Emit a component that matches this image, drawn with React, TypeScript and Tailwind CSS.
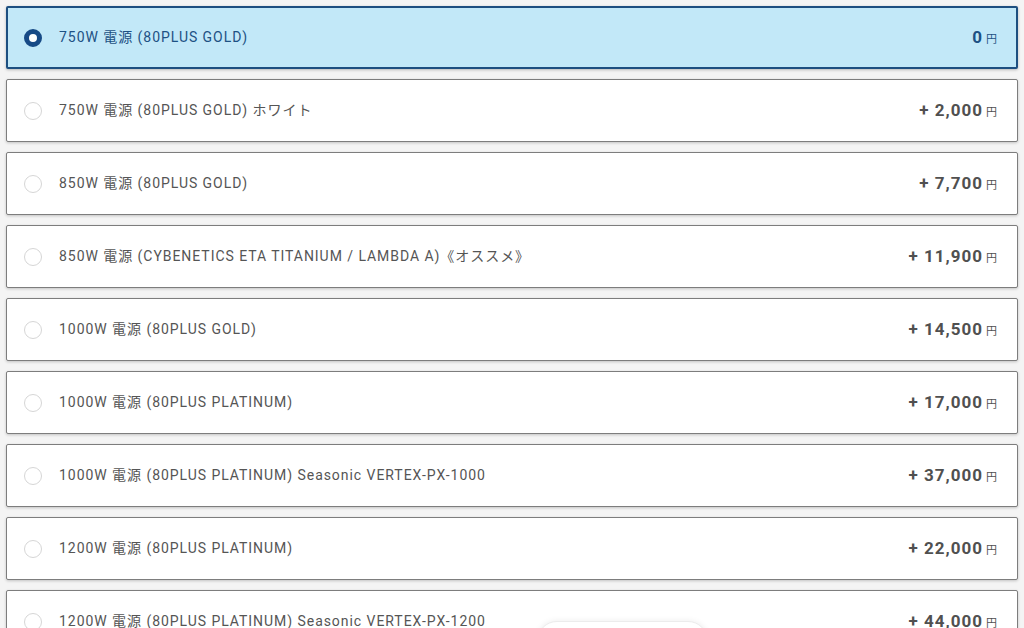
const options = [
  { label: "750W 電源 (80PLUS GOLD)", price: "0" },
  { label: "750W 電源 (80PLUS GOLD) ホワイト", price: "+ 2,000" },
  { label: "850W 電源 (80PLUS GOLD)", price: "+ 7,700" },
  { label: "850W 電源 (CYBENETICS ETA TITANIUM / LAMBDA A)《オススメ》", price: "+ 11,900" },
  { label: "1000W 電源 (80PLUS GOLD)", price: "+ 14,500" },
  { label: "1000W 電源 (80PLUS PLATINUM)", price: "+ 17,000" },
  { label: "1000W 電源 (80PLUS PLATINUM) Seasonic VERTEX-PX-1000", price: "+ 37,000" },
  { label: "1200W 電源 (80PLUS PLATINUM)", price: "+ 22,000" },
  { label: "1200W 電源 (80PLUS PLATINUM) Seasonic VERTEX-PX-1200", price: "+ 44,000" },
];

export default function App() {
  const selected = 0;
  return (
    <div
      className="relative w-[1024px] h-[628px] overflow-hidden bg-[#f4f4f4] px-[6px] pt-[6px]"
      style={{ fontFamily: 'Roboto, "Noto Sans CJK JP", sans-serif' }}
    >
      <div className="flex flex-col gap-[10px]">
        {options.map((o, i) => {
          const on = i === selected;
          return (
            <label
              key={i}
              className={
                on
                  ? "flex items-center h-[63px] rounded-[2px] border-2 border-[#1d4f80] bg-[#c2e8f8] pl-[16px] pr-[19px] shadow-[0_1px_3px_rgba(0,0,0,0.25)]"
                  : "flex items-center h-[63px] rounded-[2px] border border-[#7d7d7d] bg-white pl-[17px] pr-[20px] shadow-[0_1px_3px_rgba(0,0,0,0.2)]"
              }
            >
              {on ? (
                <span className="w-[18px] h-[18px] rounded-full border-[5px] border-[#174a86] bg-white shrink-0" />
              ) : (
                <span className="w-[18px] h-[18px] rounded-full border border-[#d6d6d6] bg-white shrink-0" />
              )}
              <span
                className={
                  on
                    ? "ml-[17px] text-[14px] tracking-[0.068em] text-[#1d5184]"
                    : "ml-[17px] text-[14px] tracking-[0.068em] text-[#555555]"
                }
              >
                {o.label}
              </span>
              <span className="ml-auto flex items-baseline">
                <span
                  className={
                    on
                      ? "text-[17px] font-bold tracking-[0.06em] text-[#1d5184]"
                      : "text-[17px] font-bold tracking-[0.06em] text-[#505050]"
                  }
                >
                  {o.price}
                </span>
                <span
                  className={
                    on
                      ? "ml-[3px] text-[11px] text-[#1d5184]"
                      : "ml-[3px] text-[11px] text-[#505050]"
                  }
                >
                  円
                </span>
              </span>
            </label>
          );
        })}
      </div>
      <div className="absolute left-[537px] top-[621px] w-[171px] h-[40px] rounded-full bg-white border border-[#ececec] shadow-[0_0_6px_rgba(0,0,0,0.08)]" />
    </div>
  );
}
